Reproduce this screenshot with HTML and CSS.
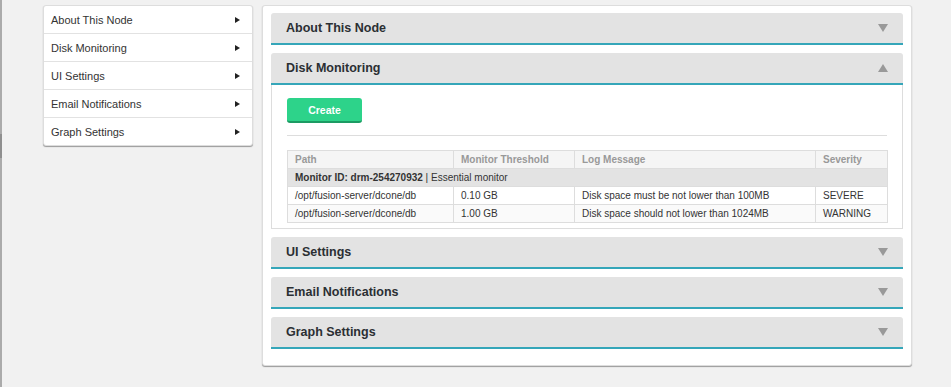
FILE: index.html
```html
<!DOCTYPE html>
<html lang="en">
<head>
  <meta charset="UTF-8" />
  <meta name="viewport" content="width=device-width, initial-scale=1.0" />
  <title>Node Settings</title>
  <link rel="stylesheet" href="styles.css">
</head>
<body>
  <div class="edge"></div>
  <div class="page">
    <!-- side menu -->
    <ul class="side-menu">
      <li>About This Node <span class="arrow"></span></li>
      <li>Disk Monitoring <span class="arrow"></span></li>
      <li>UI Settings <span class="arrow"></span></li>
      <li>Email Notifications <span class="arrow"></span></li>
      <li>Graph Settings <span class="arrow"></span></li>
    </ul>

    <!-- settings panels -->
    <div class="panel">
      <div class="section">
        <div class="section-head">About This Node <span class="caret"></span></div>
      </div>

      <div class="section open">
        <div class="section-head">Disk Monitoring <span class="caret up"></span></div>
        <div class="section-body">
          <button class="btn-create">Create</button>
          <hr>
          <table class="monitors">
            <thead>
              <tr>
                <th class="c-path">Path</th>
                <th class="c-thr">Monitor Threshold</th>
                <th class="c-msg">Log Message</th>
                <th>Severity</th>
              </tr>
            </thead>
            <tbody>
              <tr class="group">
                <td colspan="4"><b>Monitor ID: drm-254270932</b> | Essential monitor</td>
              </tr>
              <tr>
                <td>/opt/fusion-server/dcone/db</td>
                <td>0.10 GB</td>
                <td>Disk space must be not lower than 100MB</td>
                <td>SEVERE</td>
              </tr>
              <tr class="alt">
                <td>/opt/fusion-server/dcone/db</td>
                <td>1.00 GB</td>
                <td>Disk space should not lower than 1024MB</td>
                <td>WARNING</td>
              </tr>
            </tbody>
          </table>
        </div>
      </div>

      <div class="section">
        <div class="section-head">UI Settings <span class="caret"></span></div>
      </div>
      <div class="section">
        <div class="section-head">Email Notifications <span class="caret"></span></div>
      </div>
      <div class="section">
        <div class="section-head">Graph Settings <span class="caret"></span></div>
      </div>
    </div>
  </div>
</body>
</html>
```

FILE: styles.css
```css
/* base */
body {
  margin: 0;
  display: flex;
  height: 100vh;
  background: #f1f1f1;
  font-family: "Liberation Sans", Arial, sans-serif;
  color: #333;
}

.edge {
  width: 2px;
  flex-shrink: 0;
  background: linear-gradient(#ababab 0, #ababab 134px, #8f8f8f 134px, #8f8f8f 158px, #ababab 158px);
}

.page {
  display: flex;
  align-items: flex-start;
  gap: 9px;
  padding: 5px 0 0 41px;
}

/* side menu */
.side-menu {
  list-style: none;
  margin: 0;
  padding: 0;
  width: 208px;
  background: #fff;
  border: 1px solid #ddd;
  border-radius: 3px;
  box-shadow: 0 1px 1px #999;
}

.side-menu li {
  display: flex;
  justify-content: space-between;
  align-items: center;
  height: 27px;
  padding: 0 12px 0 7px;
  font-size: 11px;
  border-bottom: 1px solid #e2e2e2;
}

.side-menu li:last-child {
  border-bottom: none;
}

.arrow {
  width: 0;
  height: 0;
  border-top: 3px solid transparent;
  border-bottom: 3px solid transparent;
  border-left: 5px solid #222;
}

/* panel */
.panel {
  width: 632px;
  padding: 7px 8px 16px;
  background: #fff;
  border: 1px solid #ddd;
  border-radius: 3px;
  box-shadow: 0 1px 1px #999;
}

.section + .section {
  margin-top: 8px;
}

.section-head {
  display: flex;
  justify-content: space-between;
  align-items: center;
  height: 30px;
  padding: 0 15px 0 15px;
  background: #e3e3e3;
  border-bottom: 2px solid #35a6b9;
  border-radius: 3px 3px 0 0;
  font-size: 12.5px;
  font-weight: bold;
  color: #2b2f33;
}

.caret {
  width: 0;
  height: 0;
  border-left: 5px solid transparent;
  border-right: 5px solid transparent;
  border-top: 8px solid #999;
}

.caret.up {
  border-top: none;
  border-bottom: 8px solid #999;
}

.section-body {
  padding: 13px 15px 5px;
  border: 1px solid #ddd;
  border-top: none;
}

.btn-create {
  display: block;
  width: 75px;
  height: 25px;
  padding: 0;
  background: #2dd38a;
  border: none;
  border-bottom: 2px solid #1c9b63;
  border-radius: 3px;
  color: #fff;
  font-family: inherit;
  font-size: 10.5px;
  font-weight: bold;
}

.section-body hr {
  margin: 12px 0 14px;
  border: none;
  border-top: 1px solid #ddd;
}

/* table */
.monitors {
  width: 601px;
  border-collapse: collapse;
  font-size: 10px;
  border: 1px solid #ddd;
}

.monitors th,
.monitors td {
  height: 17px;
  padding: 0 7px;
  border: 1px solid #ddd;
  text-align: left;
  white-space: nowrap;
}

.monitors th {
  background: #f5f5f5;
  color: #999;
  font-weight: bold;
}

.c-path { width: 151px; }
.c-thr { width: 106px; }
.c-msg { width: 226px; }

.monitors tr.group td {
  height: 17px;
  background: #e3e3e3;
}

.monitors tr.alt td {
  background: #fafafa;
}
```
